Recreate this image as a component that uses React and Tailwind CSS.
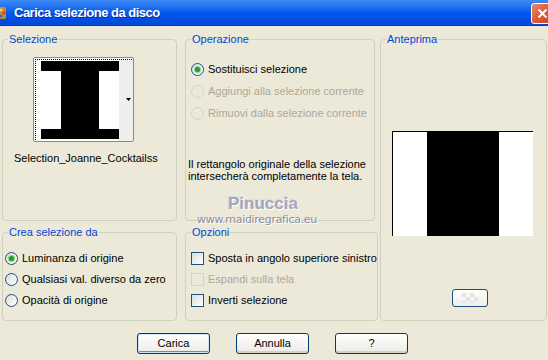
import clsx from "clsx";

const Group = ({ title, className, children }) => (
  <fieldset className={clsx("border border-[#D0D0BF] rounded-[4px]", className)}>
    <legend className="ml-[5px] px-[1px] leading-[13px] text-[#0046D5]">{title}</legend>
    {children}
  </fieldset>
);

const Radio = ({ checked, disabled, label }) => (
  <div className="flex items-center h-[13px]">
    <span
      className={clsx(
        "w-[13px] h-[13px] rounded-full border flex items-center justify-center shrink-0",
        disabled ? "border-[#D6D3C6]" : "border-[#1C5180] bg-gradient-to-br from-[#DCDCD7] to-white"
      )}
    >
      {checked && <span className="w-[5px] h-[5px] rounded-full bg-[#21A121] shadow-[0_0_0_1px_#8FD08F]" />}
    </span>
    <span className={clsx("ml-[4px] whitespace-nowrap", disabled ? "text-[#ACA899]" : "text-black")}>{label}</span>
  </div>
);

const Check = ({ disabled, label }) => (
  <div className="flex items-center h-[13px]">
    <span
      className={clsx(
        "w-[13px] h-[13px] border shrink-0",
        disabled ? "border-[#D6D3C6]" : "border-[#1C5180] bg-gradient-to-br from-[#DCDCD7] to-white"
      )}
    />
    <span className={clsx("ml-[4px] whitespace-nowrap", disabled ? "text-[#ACA899]" : "text-black")}>{label}</span>
  </div>
);

const Button = ({ label, primary }) => (
  <button
    className={clsx(
      "w-[73px] h-[21px] rounded-[3px] border border-[#003C74] bg-gradient-to-b from-white to-[#ECEBE6] text-black leading-[19px]",
      primary
        ? "shadow-[inset_0_0_0_1px_#CEE7FF,inset_0_-2px_0_#6982EE,inset_1px_0_0_#A9C8F5]"
        : "shadow-[inset_0_-2px_0_#D6D0C5]"
    )}
  >
    {label}
  </button>
);

export default function App() {
  return (
    <div className="relative w-[548px] h-[360px] overflow-hidden bg-[#ECE9D8] font-['Liberation_Sans',Arial,sans-serif] text-[11px]">
      {/* title bar */}
      <div className="h-[26px] flex items-center bg-gradient-to-b from-[#3D8BF5] via-[#0058EE] to-[#0046D4] shadow-[inset_0_-1px_0_#003DB5]">
        <svg width="10" height="16" viewBox="0 0 10 16" className="ml-[-2px]">
          <rect x="0" y="2" width="8" height="12" rx="2" fill="#C48A3A" />
          <circle cx="3" cy="5" r="1.6" fill="#F2D33A" />
          <circle cx="6" cy="8" r="1.6" fill="#D83A2B" />
          <circle cx="3" cy="11" r="1.6" fill="#2F66D8" />
        </svg>
        <span className="ml-[6px] text-white font-bold text-[13px] tracking-[-0.5px] [text-shadow:1px_1px_0_#0A2C9A]">
          Carica selezione da disco
        </span>
        <div className="ml-auto mr-[-5px] w-[22px] h-[21px] rounded-[3px] border border-white bg-gradient-to-br from-[#EA8A6C] via-[#E05A33] to-[#C8421E] flex items-center justify-center">
          <svg width="11" height="11" viewBox="0 0 11 11">
            <path d="M1.5 1.5 L9.5 9.5 M9.5 1.5 L1.5 9.5" stroke="white" strokeWidth="2" />
          </svg>
        </div>
      </div>

      {/* body */}
      <div className="flex pt-[7px] pl-[2px]">
        <div className="flex flex-col gap-[5px] w-[175px]">
          <Group title="Selezione" className="h-[188px]">
            <div className="mt-[11px] ml-[30px] w-[101px] h-[85px] rounded-[2px] border border-[#6F8FB0] p-[1px] bg-white">
              <div className="w-full h-full border border-dotted border-black">
                <svg width="97" height="81" viewBox="0 0 97 81" className="block">
                  <rect width="97" height="81" fill="white" />
                  <rect x="83" y="0" width="14" height="81" fill="#EEEEEE" />
                  <rect x="5" y="1" width="78" height="10" fill="black" />
                  <rect x="25" y="11" width="38" height="58" fill="black" />
                  <rect x="5" y="69" width="78" height="10" fill="black" />
                  <polygon points="90,38 95,38 92.5,41" fill="black" />
                </svg>
              </div>
            </div>
            <div className="mt-[10px] ml-[11px] leading-[13px] whitespace-nowrap">Selection_Joanne_Cocktailss</div>
          </Group>
          <Group title="Crea selezione da" className="h-[95px]">
            <div className="mt-[13px] ml-[2px] flex flex-col gap-[8px]">
              <Radio checked label="Luminanza di origine" />
              <Radio label="Qualsiasi val. diverso da zero" />
              <Radio label="Opacità di origine" />
            </div>
          </Group>
        </div>

        <div className="flex flex-col gap-[5px] w-[190px] ml-[8px]">
          <Group title="Operazione" className="h-[188px]">
            <div className="mt-[17px] ml-[5px] flex flex-col gap-[9px]">
              <Radio checked label="Sostituisci selezione" />
              <Radio disabled label="Aggiungi alla selezione corrente" />
              <Radio disabled label="Rimuovi dalla selezione corrente" />
            </div>
            <p className="mt-[38px] ml-[2px] leading-[12px]">
              Il rettangolo originale della selezione
              <br />
              intersecherà completamente la tela.
            </p>
          </Group>
          <Group title="Opzioni" className="h-[95px]">
            <div className="mt-[13px] ml-[5px] flex flex-col gap-[8px]">
              <Check label="Sposta in angolo superiore sinistro" />
              <Check disabled label="Espandi sulla tela" />
              <Check label="Inverti selezione" />
            </div>
          </Group>
        </div>

        <Group title="Anteprima" className="ml-[5px] w-[167px] h-[288px]">
          <div className="mt-[85px] ml-[11px] w-[141px] h-[105px] flex border-l border-t border-black">
            <div className="w-[34px] bg-white" />
            <div className="w-[72px] bg-black" />
            <div className="flex-1 bg-white" />
          </div>
          <div className="mt-[53px] ml-[71px] w-[36px] h-[18px] rounded-[3px] border border-[#1F4D7E] bg-gradient-to-b from-white to-[#EFEEE8] flex items-center justify-center">
            <svg width="16" height="10" viewBox="0 0 16 10">
              <rect x="0" y="0" width="4" height="4" fill="#E4E4E4" />
              <rect x="8" y="0" width="4" height="4" fill="#E4E4E4" />
              <rect x="4" y="4" width="4" height="4" fill="#E4E4E4" />
              <rect x="12" y="4" width="4" height="4" fill="#E4E4E4" />
              <rect x="0" y="8" width="4" height="2" fill="#E4E4E4" />
              <rect x="8" y="8" width="4" height="2" fill="#E4E4E4" />
            </svg>
          </div>
        </Group>
      </div>

      {/* buttons */}
      <div className="flex mt-[12px] pl-[137px] gap-[26px]">
        <Button primary label="Carica" />
        <Button label="Annulla" />
        <Button label="?" />
      </div>

      {/* watermark */}
      <div className="absolute left-[228px] top-[194px] text-[17px] leading-[20px] font-bold text-[#A4A6B8] [text-shadow:1px_1px_0_#FFFFFF,-1px_-1px_0_#D8D8E0] pointer-events-none">
        Pinuccia
      </div>
      <div className="absolute left-[197px] top-[214px] text-[11px] leading-[12px] text-[#8C8E9E] font-['DejaVu_Sans',sans-serif] tracking-[-0.3px] [text-shadow:1px_1px_0_#FFFFFF] pointer-events-none">
        www.maidiregrafica.eu
      </div>
    </div>
  );
}
